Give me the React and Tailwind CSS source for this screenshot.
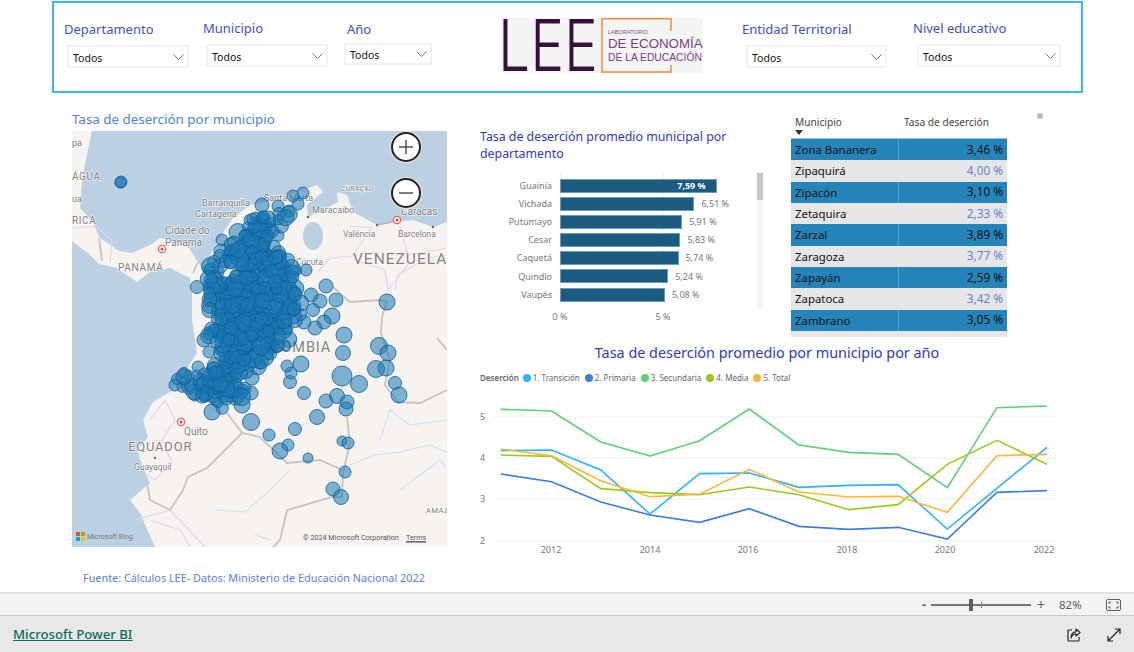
import React from "react";

const FONT = '"Noto Sans", "Open Sans", sans-serif';

function hash(n) {
  const v = Math.sin(n * 12.9898 + 4.1414) * 43758.5453;
  return v - Math.floor(v);
}

const clusterZoom = [[250,85],[290,65],[330,100],[370,40],[415,30],[415,80],[370,140],[350,200],[400,240],[430,320],[440,390],[420,440],[380,490],[330,550],[260,590],[250,660],[200,690],[140,710],[60,640],[20,610],[50,570],[130,560],[140,500],[110,470],[130,420],[100,360],[90,320],[115,240],[190,180],[210,130]];
const cluster = clusterZoom.map(([x, y]) => [165 + x / 3, 180 + y / 3]);

function inside(px, py) {
  let c = false;
  for (let i = 0, j = cluster.length - 1; i < cluster.length; j = i++) {
    const [xi, yi] = cluster[i];
    const [xj, yj] = cluster[j];
    if (yi > py !== yj > py && px < ((xj - xi) * (py - yi)) / (yj - yi) + xi) c = !c;
  }
  return c;
}

function fits(x, y, e) {
  return inside(x - e, y) && inside(x + e, y) && inside(x, y - e) && inside(x, y + e);
}

const dots = (() => {
  const out = [];
  let n = 1;
  for (let gx = 170; gx < 326; gx += 5.3) {
    for (let gy = 185; gy < 422; gy += 5.3) {
      n += 5;
      const x = gx + (hash(n) - 0.5) * 7;
      const y = gy + (hash(n + 1) - 0.5) * 7;
      const rad = 5 + hash(n + 2) * 3.8;
      if (!fits(x, y, rad * 0.7)) continue;
      if (!fits(x, y, rad * 1.9) && hash(n + 3) < 0.6) continue;
      if (Math.hypot(x - 225, y - 273) < rad + 0.8) continue;
      out.push([x, y, rad, hash(n + 4)]);
    }
  }
  return out.sort((a, b) => a[3] - b[3]);
})();

const outer = [
  [326,286,7],[336,300,7],[320,301,7],[387,302,8],[332,316,8],[324,322,7],[315,328,7],[344,335,8],[343,353,7.5],[379,346,8.5],[388,353,8],[376,369,8.5],[386,368,8],[342,376,10],[359,384,8.5],[395,383,6.5],[399,395,8],
  [304,393,6.5],[326,401,7],[337,396,7.5],[347,402,7],[346,409,7],[317,417,7.5],[251,422,8.5],[295,429,6.5],[269,435,6],[288,445,6],[280,451,8],[342,441,5],[348,443,6],[308,458,5],[345,472,6],[333,489,7],[341,497,7.5],
  [301,364,8],[290,382,6.5],[291,373,6],[287,366,6],[242,405,8],[251,393,7],[252,378,7],[175,385,6],[177,379,5.5],[184,373,5.5],[198,367,6],[212,412,8],[197,287,6.5],
  [303,193,6],[293,196,6],[298,204,6],[278,206,6],[262,205,7],[289,211,6],[121,182,6],[120.5,182.5,5.5],
  [214,262,6.5],[218,272,6],[311,295,7],[313,310,6.5],[304,322,7],[222,240,6],[306,270,6],[204,340,7],[209,352,6],
];

const landPts = "72,131 92,131 85,164 82,181 80,208 92,221 100,238 119,251 132,253 152,244 160,238 172,241 189,248 203,270 218,240 233,218 250,205 267,202 287,195 317,185 323,192 307,205 308,217 327,208 338,202 337,192 347,195 353,212 377,225 397,222 413,220 433,227 447,222 447,547 155,547 140,513 130,500 150,483 143,467 137,450 148,437 143,420 153,402 173,390 197,353 192,320 192,292 190,278 170,268 150,272 137,282 117,268 99,264 89,254 72,241";

const borders = [
  "333,287 350,302 380,300 387,302 382,317 381,333 390,360 385,385 398,402 420,403 447,390",
  "347,417 350,443 343,473 342,497 333,497 287,510 280,540 273,547",
  "342,470 320,460 287,463 260,437 242,433 227,413",
  "242,433 207,468 188,477 183,490 170,510 150,500 147,483",
  "99,238 102,261",
  "437,338 447,350",
  "193,273 198,262",
];
const pink = [
  "72,228 95,226 112,240 110,262",
  "348,226 372,228 352,256 330,258 318,272",
  "360,262 385,270 388,290 410,262 447,255",
  "400,226 408,255 447,248",
  "150,420 165,400 175,420 162,440 172,462 155,480 148,475",
  "162,440 145,445",
  "135,520 170,510 205,547",
  "150,520 180,530 190,547",
];
const rivers = [
  "395,290 398,275 420,262 447,258",
  "350,465 375,455 400,452 430,445 447,452",
  "215,510 245,512 270,490 290,470",
  "380,440 390,410 410,425 447,420",
  "400,490 440,460 447,468",
  "270,540 255,535",
];

function MapLabel({ x, y, size = 9, spacing, children, anchor = "start", fill = "#85817e" }) {
  return (
    <text x={x} y={y} fontSize={size} letterSpacing={spacing} textAnchor={anchor} fill={fill} stroke="#ffffff" strokeOpacity="0.65" strokeWidth="1.6" paintOrder="stroke" fontFamily="Roboto, sans-serif">
      {children}
    </text>
  );
}

function Target({ x, y }) {
  return (
    <g>
      <circle cx={x} cy={y} r="3.6" fill="#fff" stroke="#ee5a52" strokeWidth="1.2" />
      <circle cx={x} cy={y} r="1.5" fill="#e2453e" />
    </g>
  );
}

function BubbleMap() {
  return (
    <div className="relative w-[375px] h-[416px] overflow-hidden bg-[#bcd0e4]">
      <svg width="375" height="416" viewBox="72 131 375 416" className="block">
        <polygon points={landPts} fill="#f6f3f1" />
        <ellipse cx="313" cy="236" rx="10" ry="14" fill="#bcd0e4" />
        {pink.map((p, i) => <polyline key={i} points={p} fill="none" stroke="#e9cfee" strokeWidth="1.2" />)}
        {rivers.map((p, i) => <polyline key={i} points={p} fill="none" stroke="#cfe0ef" strokeWidth="1.1" />)}
        {borders.map((p, i) => <polyline key={i} points={p} fill="none" stroke="#c6c3c0" strokeWidth="1.8" />)}
        <polyline points="377,225 397,221" fill="none" stroke="#c9a8d8" strokeWidth="1.5" />
        <MapLabel x="72" y="146" size="9">pa</MapLabel>
        <MapLabel x="72" y="180" size="10" spacing="0.6">ÁGUA</MapLabel>
        <MapLabel x="72" y="202" size="9">ua</MapLabel>
        <MapLabel x="72" y="224" size="10" spacing="0.6">RICA</MapLabel>
        <MapLabel x="202" y="206" size="9">Barranquilla</MapLabel>
        <MapLabel x="195" y="217" size="9">Cartagena</MapLabel>
        <MapLabel x="264" y="201" size="9">Santa Marta</MapLabel>
        <MapLabel x="341" y="191" size="6.5" spacing="0.5">CURAÇAO</MapLabel>
        <MapLabel x="312" y="213" size="9">Maracaibo</MapLabel>
        <MapLabel x="401" y="215" size="10">Caracas</MapLabel>
        <MapLabel x="343" y="237" size="8.5">Valência</MapLabel>
        <MapLabel x="398" y="237" size="8.5">Barcelona</MapLabel>
        <MapLabel x="165" y="234" size="10">Cidade do</MapLabel>
        <MapLabel x="165" y="246" size="10">Panamá</MapLabel>
        <MapLabel x="118" y="271" size="10" spacing="0.7">PANAMÁ</MapLabel>
        <MapLabel x="353" y="264" size="15.5" spacing="1">VENEZUELA</MapLabel>
        <MapLabel x="296" y="265" size="8.5">Cúcuta</MapLabel>
        <MapLabel x="252" y="352" size="14.5" spacing="0.9">COLOMBIA</MapLabel>
        <MapLabel x="184" y="435" size="10">Quito</MapLabel>
        <MapLabel x="128" y="451" size="13" spacing="0.8">EQUADOR</MapLabel>
        <MapLabel x="134" y="470" size="8.5">Guayaquil</MapLabel>
        <MapLabel x="426" y="513" size="7.5" spacing="0.5">AMAZ</MapLabel>
        <circle cx="308" cy="217" r="1.2" fill="#666" />
        <circle cx="377" cy="225" r="1.2" fill="#666" />
        <circle cx="433" cy="227" r="1.2" fill="#666" />
        <circle cx="155" cy="458" r="1.2" fill="#666" />
        <Target x="162" y="249" />
        <Target x="181" y="422" />
        <Target x="397" y="220" />
        {[...outer, ...dots].map(([x, y, r], i) => (
          <circle key={i} cx={x} cy={y} r={r} fill="#1b78b2" fillOpacity="0.55" stroke="#0c6199" strokeOpacity="0.9" strokeWidth="0.9" />
        ))}
        <rect x="76" y="532" width="4" height="4" fill="#f25022" />
        <rect x="81" y="532" width="4" height="4" fill="#7fba00" />
        <rect x="76" y="537" width="4" height="4" fill="#00a4ef" />
        <rect x="81" y="537" width="4" height="4" fill="#ffb900" />
        <text x="87" y="539" fontSize="7" fill="#777" fontFamily="Roboto, sans-serif">Microsoft Bing</text>
        <text x="303" y="540" fontSize="7.2" fill="#555" fontFamily="Roboto, sans-serif">© 2024 Microsoft Corporation</text>
        <text x="406" y="540" fontSize="7.2" fill="#555" textDecoration="underline" fontFamily="Roboto, sans-serif">Terms</text>
        <line x1="406" y1="542" x2="426" y2="542" stroke="#3b4a8f" strokeWidth="1" />
      </svg>
      <ZoomButton top="top-[1px]" plus />
      <ZoomButton top="top-[47px]" />
    </div>
  );
}

function ZoomButton({ top, plus }) {
  return (
    <div className={`absolute left-[319px] ${top} w-[30px] h-[30px] rounded-full bg-white border-2 border-[#222] shadow-[0_0_0_1.5px_#dcdcdc] flex items-center justify-center`}>
      <svg width="18" height="18" viewBox="0 0 18 18">
        <line x1="2" y1="9" x2="16" y2="9" stroke="#444" strokeWidth="1.4" />
        {plus && <line x1="9" y1="2" x2="9" y2="16" stroke="#444" strokeWidth="1.4" />}
      </svg>
    </div>
  );
}

function Dropdown({ className }) {
  return (
    <div className={`flex items-center justify-between border-2 border-[#f2f2f2] pl-[4px] pr-[3px] text-[10.5px] text-[#111] ${className}`}>
      <span className="mt-[4px]">Todos</span>
      <svg width="11" height="6" viewBox="0 0 11 6"><polyline points="0.5,0.5 5.5,5.5 10.5,0.5" fill="none" stroke="#666" strokeWidth="0.9" /></svg>
    </div>
  );
}

function Logo() {
  return (
    <svg width="202" height="55" viewBox="0 0 202 55" className="block ml-[69px] mt-[15px] shrink-0 bg-[#f5f5f5]">
      <text x="-3" y="53" fontSize="71" fontWeight="300" textLength="100" lengthAdjust="spacingAndGlyphs" fill="#351038" fontFamily="Inter, 'Liberation Sans', sans-serif">LEE</text>
      <polyline points="170,13 170,0.75 101,0.75 101,54 170,54 170,47" fill="none" stroke="#ef8a3d" strokeWidth="1.5" />
      <text x="107" y="16" fontSize="5.6" fill="#7b4b80" fontFamily="'Liberation Sans', sans-serif">LABORATORIO</text>
      <text x="107" y="30" fontSize="13.3" fill="#7b3f7e" fontFamily="'Liberation Sans', sans-serif">DE ECONOMÍA</text>
      <text x="107" y="42.5" fontSize="10.3" fill="#7b3f7e" fontFamily="'Liberation Sans', sans-serif">DE LA EDUCACIÓN</text>
    </svg>
  );
}

const bars = [["Guainía",7.59],["Vichada",6.51],["Putumayo",5.91],["Cesar",5.83],["Caquetá",5.74],["Quindío",5.24],["Vaupés",5.08]];

function BarChart() {
  return (
    <div className="w-[285px] shrink-0 pt-[35px]">
      <div className="text-[12.35px] leading-[17px] text-[#3138c2] w-[280px]">Tasa de deserción promedio municipal por departamento</div>
      <div className="relative mt-[11px] flex">
        <div className="w-[277px] pt-[3.5px]">
          {bars.map(([n, v], i) => (
            <div key={n} className="flex items-center h-[18.17px] text-[9px] text-[#777]">
              <div className="w-[72px] text-right shrink-0">{n}</div>
              <div className="ml-[8px] h-[14px] bg-[#1b5b80] border border-[#6d9ab4] flex items-center justify-end pr-[10px] z-10" style={{ width: v * 20.65 }}>
                {i === 0 && <span className="text-white font-bold">7,59 %</span>}
              </div>
              {i > 0 && <div className="ml-[7px] z-10">{v.toFixed(2).replace(".", ",")} %</div>}
            </div>
          ))}
          <div className="flex h-[16px] mt-[6px] text-[9px] text-[#777]">
            <div className="ml-[72px] w-[16px] text-center">0 %</div>
            <div className="ml-[87px] w-[16px] text-center">5 %</div>
          </div>
        </div>
        <div className="w-[6px] h-[137px] bg-[#f3f3f3]">
          <div className="w-[6px] h-[27px] bg-[#c6c6c6]" />
        </div>
        <div className="absolute left-[80px] top-0 w-px h-[132px] bg-[#eeeeee]" />
        <div className="absolute left-[183px] top-0 w-px h-[132px] bg-[#eeeeee]" />
      </div>
    </div>
  );
}

const rows = [["Zona Bananera","3,46 %"],["Zipaquirá","4,00 %"],["Zipacón","3,10 %"],["Zetaquira","2,33 %"],["Zarzal","3,89 %"],["Zaragoza","3,77 %"],["Zapayán","2,59 %"],["Zapatoca","3,42 %"],["Zambrano","3,05 %"],["Yumbo","3,12 %"]];

function DataTable() {
  return (
    <div className="relative w-[216px] ml-[26px] mt-[19px] shrink-0">
      <div className="relative flex h-[26px] text-[10.2px] text-[#444] items-start pt-[3px]">
        <div className="w-[108px] pl-[4px]">Municipio</div>
        <div className="pl-[5px]">Tasa de deserción</div>
        <svg width="8" height="5" viewBox="0 0 8 5" className="absolute left-[4px] top-[18px]"><polygon points="0,0 8,0 4,5" fill="#333" /></svg>
      </div>
      <div className="h-[199px] overflow-hidden border-t border-[#8fc0de]">
        {rows.map(([n, v], i) => (
          <div key={n} className={`flex h-[21.33px] items-center ${i % 2 === 0 ? "bg-[#2585bb]" : "bg-[#e6e6e6]"}`}>
            <div className={`w-[108px] pl-[4px] h-full flex items-center text-[11.4px] text-[#111] border-r ${i % 2 === 0 ? "border-[#5aa3cf]" : "border-[#e6e6e6]"}`}>{n}</div>
            <div className={`flex-1 text-right pr-[4px] text-[11.8px] ${i % 2 === 0 ? "text-[#111]" : "text-[#5f84d4]"}`}>{v}</div>
          </div>
        ))}
      </div>
    </div>
  );
}

const years = [80,212,340,468,597,726,855,985,1113,1241,1370,1500];
const series = [
  ["#5ecf7a",[208,213,306,348,302,207,315,337,343,443,203,198]],
  ["#2eb2ff",[332,330,390,522,401,399,442,436,434,567,445,322]],
  ["#3e7fd6",[402,425,486,525,547,506,559,568,562,597,457,452]],
  ["#9cc81e",[345,349,446,458,464,441,464,509,494,373,301,373]],
  ["#f4b93a",[327,347,422,470,463,388,456,471,469,517,347,343]],
];
const legend = [["#2eb2ff","1. Transición"],["#3e7fd6","2. Primaria"],["#5ecf7a","3. Secundaria"],["#9cc81e","4. Media"],["#f4b93a","5. Total"]];

function LineChart() {
  const tick = { fontSize: 9, fill: "#777", fontFamily: FONT };
  return (
    <div>
      <div className="h-[28px] w-[574px] text-center text-[14.4px] leading-[28px] text-[#3138c2]">Tasa de deserción promedio por municipio por año</div>
      <div className="flex items-center h-[22px] text-[8px] text-[#666]">
        <span className="font-semibold mr-[4px]">Deserción</span>
        {legend.map(([c, t]) => (
          <span key={t} className="flex items-center mr-[5px]">
            <span className="w-[8px] h-[8px] rounded-full mr-[2px]" style={{ background: c }} />
            {t}
          </span>
        ))}
      </div>
      <svg width="600" height="176" viewBox="470 389 600 176" className="block -ml-[10px]">
        {[417, 458, 499, 541].map((y) => <line key={y} x1="493" x2="1055" y1={y} y2={y} stroke="#f0f0f0" strokeWidth="1.2" />)}
        {[["5",417],["4",458],["3",499],["2",541]].map(([t, y]) => <text key={t} x="480" y={y + 3} {...tick}>{t}</text>)}
        {[[2012,551],[2014,650],[2016,748],[2018,847],[2020,945],[2022,1044]].map(([t, x]) => <text key={t} x={x} y="553" textAnchor="middle" {...tick}>{t}</text>)}
        {series.map(([c, vals]) => (
          <polyline key={c} points={vals.map((v, i) => `${470 + years[i] / 2.6},${340 + v / 3}`).join(" ")} fill="none" stroke={c} strokeWidth="1.6" />
        ))}
      </svg>
    </div>
  );
}

export default function App() {
  return (
    <div className="h-[652px] w-[1134px] flex flex-col bg-white overflow-hidden" style={{ fontFamily: FONT }}>
      <div className="flex-1 min-h-0">
        <div className="ml-[52px] mt-px w-[1031px] h-[92px] border-2 border-[#3ab4fb] flex items-start">
          <div className="ml-[10px] w-[125px] shrink-0">
            <div className="mt-[16px] h-[20px] leading-[20px] text-[13px] text-[#3e50c6]">Departamento</div>
            <Dropdown className="ml-[3px] mt-[6px] w-[122px] h-[23px]" />
          </div>
          <div className="ml-[14px] w-[125px] shrink-0">
            <div className="mt-[15px] h-[20px] leading-[20px] text-[13px] text-[#3e50c6]">Municipio</div>
            <Dropdown className="ml-[3px] mt-[6px] w-[122px] h-[23px]" />
          </div>
          <div className="ml-[16px] w-[88px] shrink-0">
            <div className="mt-[16px] h-[20px] leading-[20px] pl-[3px] text-[13px] text-[#3e50c6]">Año</div>
            <Dropdown className="mt-[4px] w-[88px] h-[22px]" />
          </div>
          <Logo />
          <div className="ml-[39px] w-[145px] shrink-0">
            <div className="mt-[16px] h-[20px] leading-[20px] text-[13px] text-[#3e50c6]">Entidad Territorial</div>
            <Dropdown className="ml-[4px] mt-[6px] w-[141px] h-[23px]" />
          </div>
          <div className="ml-[26px] w-[148px] shrink-0">
            <div className="mt-[15px] h-[20px] leading-[20px] text-[13px] text-[#3e50c6]">Nivel educativo</div>
            <Dropdown className="ml-[4px] mt-[6px] w-[144px] h-[23px]" />
          </div>
        </div>

        <div className="flex">
          <div className="ml-[72px] w-[375px] shrink-0">
            <div className="mt-[16px] h-[22px] leading-[20px] text-[13.4px] text-[#4f7fdc]">Tasa de deserción por municipio</div>
            <BubbleMap />
            <div className="ml-[11px] mt-[22px] text-[10.85px] leading-[18px] text-[#5a80dc] whitespace-nowrap">Fuente: Cálculos LEE- Datos: Ministerio de Educación Nacional 2022</div>
          </div>
          <div className="ml-[33px] w-[610px] shrink-0">
            <div className="flex h-[246px]">
              <BarChart />
              <DataTable />
              <div className="ml-[30px] mt-[20px] w-[6px] h-[6px] rounded-full bg-[#bdbdbd]" />
            </div>
            <LineChart />
          </div>
        </div>
      </div>

      <div className="h-[23px] shrink-0 bg-[#f3f3f3] border-t-2 border-[#e2e2e2] flex items-center text-[#605e5c]">
        <span className="ml-[922px] w-[9px] text-[13px] leading-none font-bold">-</span>
        <div className="relative w-[100px] h-[2px] bg-[#777]">
          <div className="absolute left-[38px] -top-[5px] w-[4px] h-[12px] bg-[#5f5f5f]" />
          <div className="absolute left-[50px] -top-[2px] w-px h-[6px] bg-[#777]" />
        </div>
        <span className="ml-[6px] text-[14px] leading-none">+</span>
        <span className="ml-[14px] text-[11.5px] leading-none">82%</span>
        <svg width="15" height="12" viewBox="0 0 15 12" className="ml-[24px]">
          <rect x="0.5" y="0.5" width="14" height="11" rx="1.5" fill="none" stroke="#605e5c" />
          <path d="M3 5V3H5M10 3H12V5M3 7V9H5M10 9H12V7" fill="none" stroke="#605e5c" />
        </svg>
      </div>

      <div className="h-[37px] shrink-0 bg-[#e8e8e8] border-t border-[#c8c8c8] flex items-center">
        <a className="ml-[13px] mt-[2px] text-[13.2px] font-medium underline text-[#0b6a5d]">Microsoft Power BI</a>
        <svg width="14" height="14" viewBox="0 0 14 14" className="ml-auto mt-[1px]">
          <path d="M5 2H2a1 1 0 0 0-1 1v9a1 1 0 0 0 1 1h9a1 1 0 0 0 1-1V9" fill="none" stroke="#222" strokeWidth="1.2" />
          <path d="M9 1l4 3.5-4 3.5V6C7 6 5 7 4 10c0-4 2-6 5-6.2z" fill="none" stroke="#222" strokeWidth="1.2" strokeLinejoin="round" />
        </svg>
        <svg width="14" height="14" viewBox="0 0 14 14" className="ml-[26px] mr-[13px] mt-[1px]">
          <path d="M1 13L13 1M8 1h5v5M1 8v5h5" fill="none" stroke="#222" strokeWidth="1.2" />
        </svg>
      </div>
    </div>
  );
}
